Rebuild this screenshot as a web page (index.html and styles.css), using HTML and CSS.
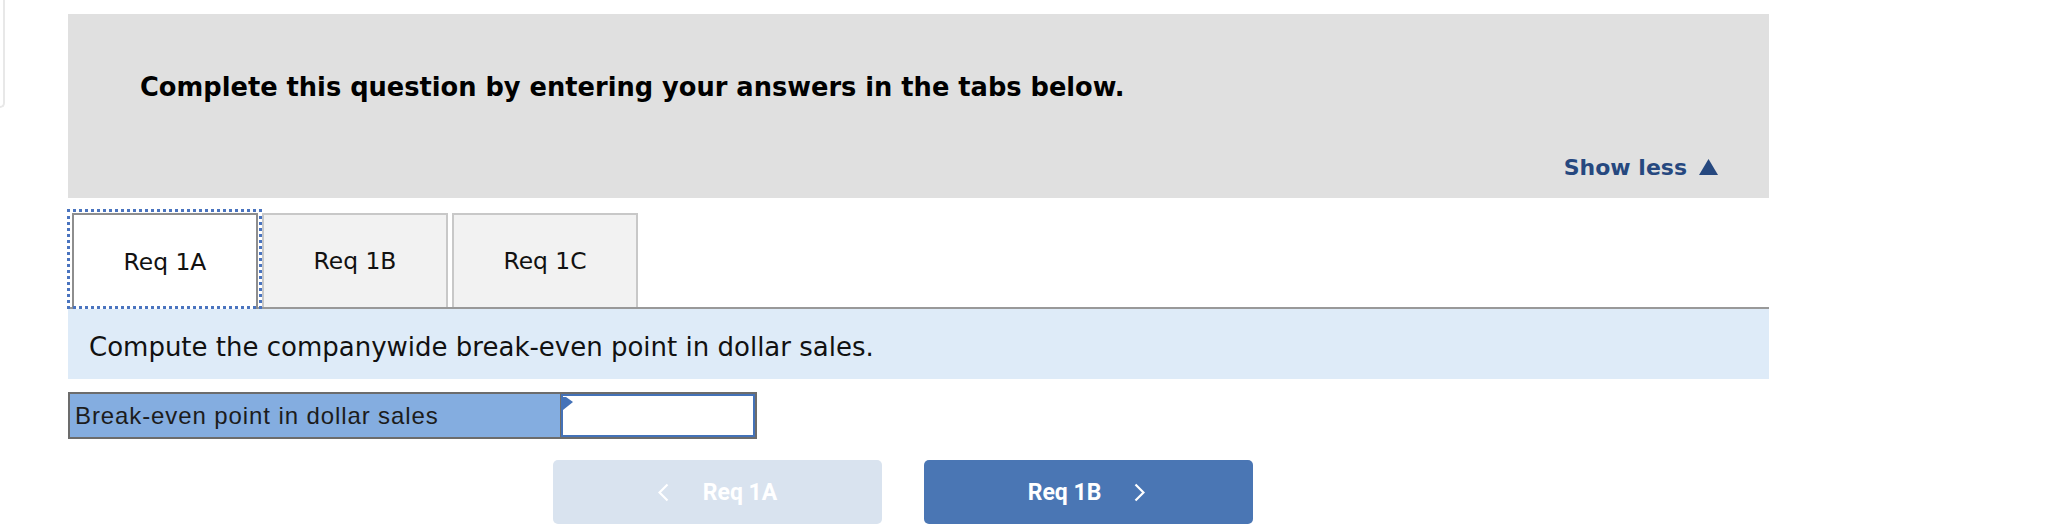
FILE: index.html
```html
<!DOCTYPE html>
<html lang="en">
<head>
<meta charset="utf-8">
<title>Req 1A</title>
<link rel="stylesheet" href="styles.css">
</head>
<body>
<div class="page">
  <div class="side-stub"></div>
  <main class="question">
    <section class="intro">
      <h2 class="intro-title">Complete this question by entering your answers in the tabs below.</h2>
      <div class="intro-toggle">
        <a class="show-less" href="#">Show less</a>
        <svg class="tri" width="19" height="16" viewBox="0 0 19 16"><polygon points="9.5,0 19,16 0,16" fill="#26487f"/></svg>
      </div>
    </section>

    <div class="tabs">
      <div class="tab tab-active">Req 1A</div>
      <div class="tab">Req 1B</div>
      <div class="tab">Req 1C</div>
    </div>

    <div class="instructions">Compute the companywide break-even point in dollar sales.</div>

    <div class="answer-row">
      <div class="answer-label">Break-even point in dollar sales</div>
      <div class="answer-input">
        <svg class="flag" width="10" height="13" viewBox="0 0 10 13"><polygon points="0,0 3,0 10,5 0,13" fill="#4472b8"/></svg>
      </div>
    </div>

    <div class="nav">
      <button class="nav-btn nav-prev" type="button">
        <svg width="11" height="19" viewBox="0 0 11 19"><polyline points="9.5,1.5 1.5,9.5 9.5,17.5" fill="none" stroke="#fff" stroke-width="2.2"/></svg>
        <span>Req 1A</span>
      </button>
      <button class="nav-btn nav-next" type="button">
        <span>Req 1B</span>
        <svg width="11" height="19" viewBox="0 0 11 19"><polyline points="1.5,1.5 9.5,9.5 1.5,17.5" fill="none" stroke="#fff" stroke-width="2.2"/></svg>
      </button>
    </div>
  </main>
</div>
</body>
</html>
```

FILE: styles.css
```css
* { box-sizing: border-box; }

html, body {
  margin: 0;
  padding: 0;
  background: #fff;
  width: 2048px;
  height: 524px;
  overflow: hidden;
}

body {
  font-family: "DejaVu Sans", Verdana, sans-serif;
  color: #111;
}

.page {
  display: flex;
  align-items: flex-start;
}

.side-stub {
  width: 5px;
  height: 108px;
  border-right: 2px solid #e8e8e8;
  border-bottom: 2px solid #e8e8e8;
  border-bottom-right-radius: 8px;
  flex: none;
}

.question {
  margin-left: 63px;
  margin-top: 14px;
  width: 1701px;
  flex: none;
}

.intro {
  background: #e0e0e0;
  height: 184px;
  padding: 58px 51px 0 72px;
}

.intro-title {
  margin: 0;
  font-size: 25.7px;
  line-height: 30px;
  font-weight: bold;
  color: #000;
}

.intro-toggle {
  margin-top: 53px;
  display: flex;
  justify-content: flex-end;
  align-items: center;
  gap: 12px;
  height: 26px;
}

.show-less {
  font-size: 22px;
  line-height: 26px;
  font-weight: bold;
  color: #26487f;
  text-decoration: none;
}

.tri { display: block; margin-bottom: 2px; }

.tabs {
  margin-top: 15px;
  display: flex;
  align-items: flex-end;
  gap: 4px;
  padding-left: 4px;
  border-bottom: 2px solid #999;
  height: 96px;
}

.tab {
  width: 186px;
  height: 94px;
  background: #f2f2f2;
  border: 2px solid #c8c8c8;
  border-bottom: none;
  display: flex;
  align-items: center;
  justify-content: center;
  font-size: 23.4px;
  color: #111;
}

.tab-active {
  position: relative;
  height: 96px;
  margin-bottom: -2px;
  background: #fff;
  border-color: #8e8e8e;
}

.tab-active::after {
  content: "";
  position: absolute;
  left: -7px;
  right: -6px;
  top: -6px;
  bottom: 0;
  border: 3px dotted #4a74bf;
}

.instructions {
  background: #deebf8;
  height: 70px;
  padding: 23px 21px 0;
  font-size: 26px;
  line-height: 30px;
  color: #111;
}

.answer-row {
  margin-top: 13px;
  width: 689px;
  height: 47px;
  border: 2px solid #6c6c6c;
  display: flex;
}

.answer-label {
  width: 491px;
  background: #84ade0;
  border-right: 1px solid #6c6c6c;
  display: flex;
  align-items: center;
  padding-left: 5px;
  font-family: "Liberation Sans", Arial, sans-serif;
  font-size: 24px;
  letter-spacing: 0.9px;
  color: #1c1c1c;
}

.answer-input {
  flex: 1;
  background: #fff;
  border: 2px solid #4472b8;
  position: relative;
}

.flag {
  position: absolute;
  left: 0;
  top: 1px;
}

.nav {
  margin-top: 21px;
  margin-left: 485px;
  display: flex;
  gap: 42px;
}

.nav-btn {
  width: 329px;
  height: 64px;
  border: none;
  border-radius: 5px;
  display: flex;
  align-items: center;
  justify-content: center;
  font-family: Roboto, "Liberation Sans", sans-serif;
  font-weight: bold;
  font-size: 23px;
  color: #fff;
  padding: 0;
}

.nav-btn svg { display: block; }

.nav-prev {
  background: #d9e3ef;
  gap: 34px;
}

.nav-next {
  background: #4a76b4;
  gap: 33px;
  padding-right: 4px;
}
```
